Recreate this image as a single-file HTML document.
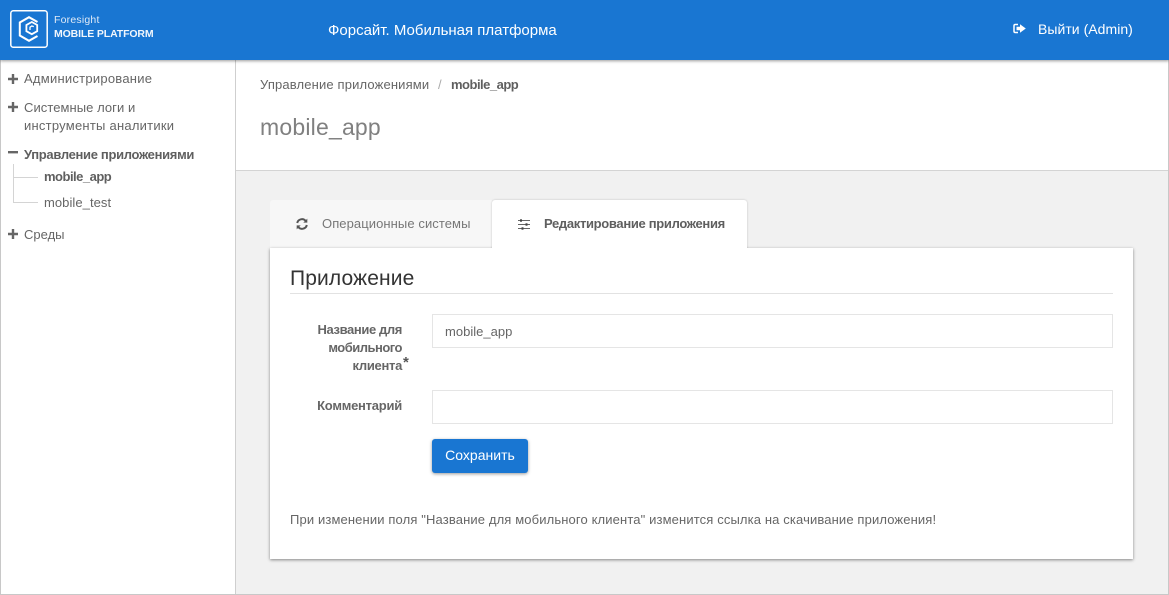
<!DOCTYPE html>
<html><head><meta charset="utf-8">
<style>
html,body{margin:0;padding:0;width:1169px;height:595px;overflow:hidden;background:#f1f1f1}
body{font-family:"Liberation Sans",sans-serif;font-size:13px;color:#666;position:relative}
.a{position:absolute;white-space:nowrap;line-height:18px}
svg{position:absolute;overflow:visible}
b{font-weight:bold}
</style></head><body>
<div class="a" style="left:236px;top:60px;width:932px;height:110px;background:#fff;border-bottom:1px solid #d4d4d4"></div>
<div class="a" style="left:0;top:60px;width:235px;height:535px;background:#fff;border-right:1px solid #cfcfcf"></div>
<div class="a" style="left:0;top:594px;width:1169px;height:1px;background:#c8c8c8"></div>
<div class="a" style="left:1168px;top:60px;width:1px;height:535px;background:#c8c8c8"></div>
<div class="a" style="left:0;top:60px;width:1px;height:535px;background:#c8c8c8"></div>
<div class="a" style="left:0;top:0;width:1169px;height:60px;background:#1976d2;box-shadow:0 1px 3px rgba(0,0,0,.4)"></div>

<svg style="left:0;top:0" width="160" height="60" fill="none" stroke="#fff">
<rect x="10.8" y="10.8" width="36.4" height="36.4" rx="2.5" stroke-width="1.5"/>
<path d="M37.5 22 L29 17.2 L19.8 22.5 V35.5 L29 40.8 L37.5 36" stroke-width="2"/>
<path d="M37.2 31.2 L31.8 34.2 L26.4 31.2 V25 L31.8 22 L37.2 25 V31.2Z" stroke-width="1.8"/>
<path d="M33.8 26.6 L31.8 26 L30 27.2 V30" stroke-width="1.3"/>
</svg>
<div class="a" style="left:54px;top:11px;font-size:10.5px;color:#dfeaf7;letter-spacing:.2px">Foresight</div>
<div class="a" style="left:54px;top:25px;font-size:10.5px;font-weight:bold;color:#f1f6fc;letter-spacing:-.12px">MOBILE PLATFORM</div>
<div class="a" style="left:328px;top:22px;font-size:15px;color:#fff">Форсайт. Мобильная платформа</div>
<svg style="left:1013px;top:23px" width="14" height="12" fill="#fff">
<path d="M5 1.5H2.2Q1 1.5 1 2.8V8.2Q1 9.5 2.2 9.5H5" fill="none" stroke="#fff" stroke-width="1.5"/>
<path d="M3.5 3.8H7V1.2L12.8 5.5 7 9.8V7.2H3.5Z"/>
</svg>
<div class="a" style="left:1038px;top:20px;font-size:14px;color:#fff;letter-spacing:.04px">Выйти (Admin)</div>

<svg style="left:8px;top:74px" width="11" height="10" fill="#666"><path d="M3.8 0H6.2V3.8H10V6.2H6.2V10H3.8V6.2H0V3.8H3.8Z"/></svg>
<div class="a" style="left:24px;top:70px;letter-spacing:.25px">Администрирование</div>
<svg style="left:8px;top:102px" width="11" height="10" fill="#666"><path d="M3.8 0H6.2V3.8H10V6.2H6.2V10H3.8V6.2H0V3.8H3.8Z"/></svg>
<div class="a" style="left:24px;top:99px;letter-spacing:.06px">Системные логи и</div>
<div class="a" style="left:24px;top:117px;letter-spacing:.24px">инструменты аналитики</div>
<svg style="left:8px;top:151px" width="11" height="4" fill="#666"><rect width="10" height="2.4"/></svg>
<div class="a" style="left:24px;top:146px;font-weight:bold;color:#5f5f5f;letter-spacing:-.32px">Управление приложениями</div>
<svg style="left:13px;top:164px" width="26" height="40" fill="none" stroke="#d4d4d4"><path d="M.5 0V38.5H25M.5 13.5H25"/></svg>
<div class="a" style="left:44px;top:168px;font-weight:bold;color:#5f5f5f;letter-spacing:-.5px">mobile_app</div>
<div class="a" style="left:44px;top:194px;letter-spacing:.06px">mobile_test</div>
<svg style="left:8px;top:229px" width="11" height="10" fill="#666"><path d="M3.8 0H6.2V3.8H10V6.2H6.2V10H3.8V6.2H0V3.8H3.8Z"/></svg>
<div class="a" style="left:24px;top:226px;">Среды</div>

<div class="a" style="left:260px;top:76px;letter-spacing:.15px">Управление приложениями</div>
<div class="a" style="left:438px;top:76px;color:#aaa">/</div>
<div class="a" style="left:451px;top:76px;font-weight:bold;color:#5f5f5f;letter-spacing:-.5px">mobile_app</div>
<div class="a" style="left:260px;top:113px;font-size:23px;line-height:28px;color:#808080;letter-spacing:.2px">mobile_app</div>

<div class="a" style="left:270px;top:200px;width:222px;height:48px;background:#f7f7f7;border-radius:3px 0 0 0"></div>
<div class="a" style="left:492px;top:200px;width:255px;height:50px;background:#fff;border-radius:3px 3px 0 0;box-shadow:0 0 2px rgba(0,0,0,.2)"></div>
<div class="a" style="left:270px;top:248px;width:863px;height:311px;background:#fff;box-shadow:0 1px 3px rgba(0,0,0,.45)"></div>
<div class="a" style="left:492px;top:240px;width:255px;height:12px;background:#fff"></div>

<svg style="left:296px;top:218px" width="12" height="12" fill="none" stroke="#555" stroke-width="2">
<path d="M1.2 5A4.8 4.8 0 0 1 9.8 3.2"/><path d="M10.8 7A4.8 4.8 0 0 1 2.2 8.8"/>
<path d="M11.3 .6V4.6H7.3Z" fill="#555" stroke="none"/><path d="M.7 11.4V7.4H4.7Z" fill="#555" stroke="none"/>
</svg>
<div class="a" style="left:322px;top:215px;color:#777;letter-spacing:.08px">Операционные системы</div>
<svg style="left:518px;top:219px" width="12" height="11" fill="none" stroke="#666">
<path d="M0 1.5H12M0 5.5H12M0 9.5H12" stroke-width="1"/>
<rect x="2" y=".3" width="2" height="2.4" fill="#444" stroke="none"/>
<rect x="7.5" y="4.3" width="2" height="2.4" fill="#444" stroke="none"/>
<rect x="3.5" y="8.3" width="2" height="2.4" fill="#444" stroke="none"/>
</svg>
<div class="a" style="left:544px;top:215px;font-weight:bold;color:#5f5f5f;letter-spacing:-.32px">Редактирование приложения</div>

<div class="a" style="left:290px;top:266px;font-size:21px;line-height:26px;color:#333;letter-spacing:.12px">Приложение</div>
<div class="a" style="left:290px;top:293px;width:823px;height:1px;background:#e2e2e2"></div>

<div class="a" style="left:290px;top:321px;width:112px;text-align:right;font-weight:bold;color:#666;letter-spacing:-.38px">Название для</div>
<div class="a" style="left:290px;top:339px;width:112px;text-align:right;font-weight:bold;color:#666;letter-spacing:-.5px">мобильного</div>
<div class="a" style="left:290px;top:357px;width:112px;text-align:right;font-weight:bold;color:#666;letter-spacing:-.3px">клиента</div>
<div class="a" style="left:403px;top:354px;font-weight:bold;color:#555;font-size:15px">*</div>
<div class="a" style="left:432px;top:314px;width:679px;height:32px;background:#fff;border:1px solid #e5e5e5"></div>
<div class="a" style="left:445px;top:323px;color:#666;letter-spacing:.02px">mobile_app</div>
<div class="a" style="left:290px;top:397px;width:112px;text-align:right;font-weight:bold;color:#666;letter-spacing:-.24px">Комментарий</div>
<div class="a" style="left:432px;top:390px;width:679px;height:32px;background:#fff;border:1px solid #e5e5e5"></div>
<div class="a" style="left:432px;top:439px;width:96px;height:34px;background:#1976d2;border-radius:3px;box-shadow:0 1px 3px rgba(0,0,0,.4);color:#fff;font-size:14px;line-height:33px;text-align:center;letter-spacing:.02px">Сохранить</div>
<div class="a" style="left:290px;top:511px;font-size:13px;color:#666;letter-spacing:.13px">При изменении поля "Название для мобильного клиента" изменится ссылка на скачивание приложения!</div>
</body></html>
